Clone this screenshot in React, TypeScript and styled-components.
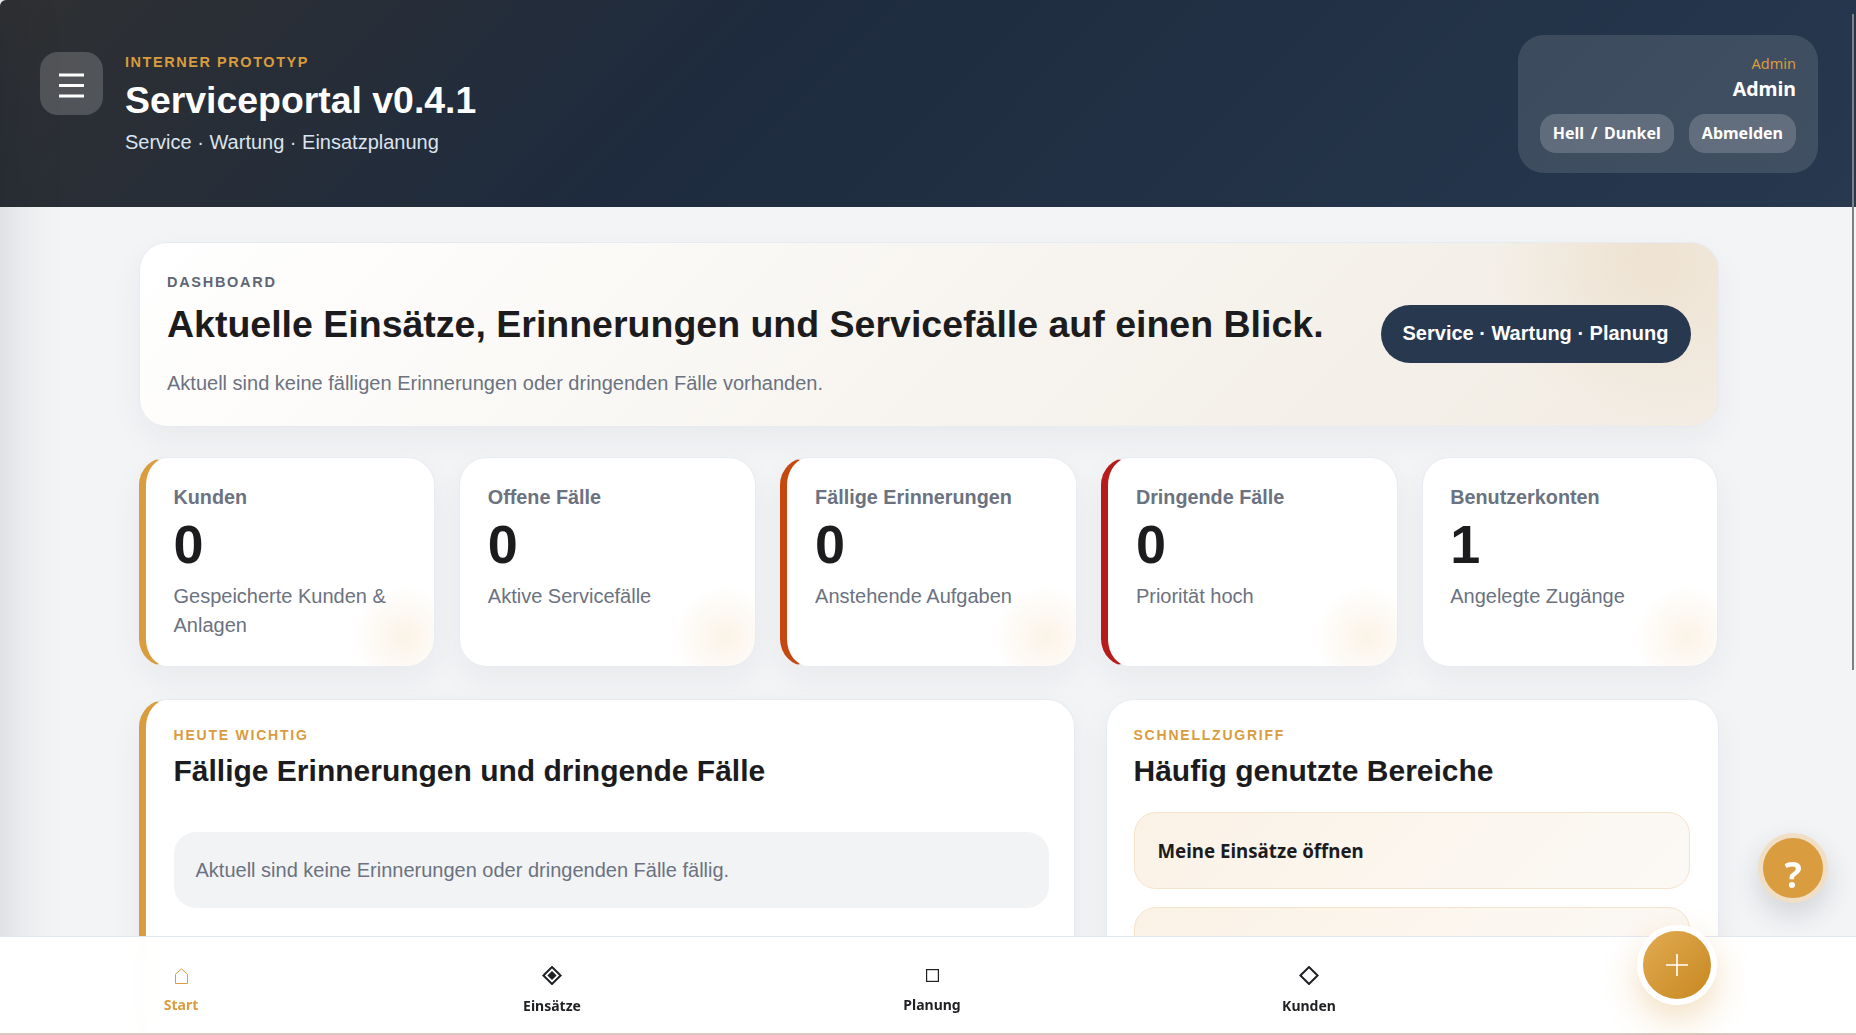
import React from 'react';
import styled, {createGlobalStyle} from 'styled-components';

const GlobalStyle = createGlobalStyle`
  html, body {
    margin: 0;
    height: 100%;
    overflow: hidden;
    background: #f3f4f6;
  }
  * {
    box-sizing: border-box;
  }
  body {
    font-family: "Liberation Sans", Arial, sans-serif;
    color: #1c1c1e;
  }
`;

const BUTTON_FONT = '"Noto Sans", "Open Sans", sans-serif';
const GOLD = '#d99c3e';

const Shell = styled.div`
  display: flex;
  flex-direction: column;
  height: 100vh;
  overflow: hidden;
`;

const Drawer = styled.aside`
  position: fixed;
  top: 0;
  left: -320px;
  width: 320px;
  height: 100%;
  box-shadow: 0 0 60px rgba(15, 23, 42, 0.16);
  z-index: 5;
`;

const Header = styled.header`
  flex: none;
  display: flex;
  align-items: center;
  justify-content: space-between;
  height: 207px;
  padding: 0 38px 0 40px;
  border-top-left-radius: 6px;
  background: linear-gradient(135deg, #2f3032 0%, #1e2b3e 38%, #27384f 100%);
`;

const Brand = styled.div`
  display: flex;
  align-items: flex-start;
  gap: 22px;
`;

const MenuButton = styled.button`
  display: flex;
  align-items: center;
  justify-content: center;
  width: 63px;
  height: 63px;
  padding: 3px 0 0;
  border: 0;
  border-radius: 18px;
  background: rgba(255, 255, 255, 0.18);
`;

const BrandText = styled.div`
  display: flex;
  flex-direction: column;
`;

const Kicker = styled.div`
  font-size: 14.5px;
  line-height: 20px;
  font-weight: 700;
  letter-spacing: 1.55px;
  text-transform: uppercase;
  color: ${GOLD};
`;

const Title = styled.h1`
  margin: 5px 0 0;
  font-size: 37.4px;
  line-height: 46px;
  font-weight: 700;
  color: #fff;
`;

const Subtitle = styled.div`
  margin-top: 6px;
  font-size: 20px;
  line-height: 26px;
  color: #dbe3ee;
`;

const UserCard = styled.div`
  display: flex;
  flex-direction: column;
  align-items: flex-end;
  width: 300px;
  height: 138px;
  padding: 16px 22px 0 0;
  border-radius: 26px;
  background: rgba(255, 255, 255, 0.12);
`;

const UserRole = styled.div`
  font-family: ${BUTTON_FONT};
  font-size: 14.5px;
  line-height: 24px;
  color: ${GOLD};
`;

const UserName = styled.div`
  margin-top: 1px;
  font-family: ${BUTTON_FONT};
  font-size: 19.5px;
  line-height: 26px;
  font-weight: 700;
  color: #fff;
`;

const UserActions = styled.div`
  display: flex;
  gap: 15px;
  margin-top: 12px;
`;

const UserButton = styled.button`
  height: 39px;
  padding: 0 13px;
  border: 0;
  border-radius: 16px;
  font-family: ${BUTTON_FONT};
  font-size: 16px;
  font-weight: 700;
  word-spacing: 2.5px;
  color: #fff;
  background: rgba(255, 255, 255, 0.18);
`;

const Main = styled.main`
  flex: 1;
  min-height: 0;
  overflow: hidden;
  display: flex;
  flex-direction: column;
  padding: 35px 137.5px 0 138.5px;
`;

const Hero = styled.section`
  flex: none;
  display: flex;
  align-items: center;
  justify-content: space-between;
  height: 185px;
  margin-bottom: 30px;
  padding: 0 27px 2px 27.5px;
  border: 1px solid #e6eaf1;
  border-radius: 28px;
  background:
    radial-gradient(circle at 96% 10%, #eee2d1 0, rgba(238, 226, 209, 0) 165px),
    linear-gradient(135deg, #ffffff 0%, #f4f0e9 75%, #f2ece3 100%);
  box-shadow: 0 12px 32px rgba(30, 41, 59, 0.05);
`;

const HeroText = styled.div`
  display: flex;
  flex-direction: column;
`;

const HeroKicker = styled.div`
  font-size: 14.5px;
  line-height: 22px;
  font-weight: 700;
  letter-spacing: 1.7px;
  color: #5f6673;
`;

const HeroTitle = styled.h2`
  margin: 8px 0 0;
  font-size: 37.5px;
  line-height: 46px;
  font-weight: 700;
`;

const HeroNote = styled.p`
  margin: 22px 0 0;
  font-size: 20px;
  line-height: 28px;
  color: #6b7280;
`;

const HeroPill = styled.div`
  flex: none;
  display: flex;
  align-items: center;
  height: 58px;
  padding: 0 22px;
  border-radius: 29px;
  font-size: 20px;
  font-weight: 700;
  color: #fff;
  background: #27384f;
`;

const StatGrid = styled.div`
  flex: none;
  display: grid;
  grid-template-columns: repeat(5, 1fr);
  gap: 24px;
  margin-bottom: 32px;
`;

const StatCard = styled.article<{$accent?: string}>`
  height: 210px;
  padding: 26px 26px 0 ${(props) => (props.$accent ? 28 : 27.5)}px;
  border: 1px solid #e8ebf1;
  border-left: ${(props) => (props.$accent ? `7px solid ${props.$accent}` : '1px solid #e8ebf1')};
  border-radius: 28px;
  background:
    radial-gradient(circle at calc(100% - 30px) calc(100% - 29px), #fbf3e7 0, rgba(251, 243, 231, 0) 52px),
    #fff;
  box-shadow: 0 12px 32px rgba(30, 41, 59, 0.05);
`;

const StatLabel = styled.div`
  font-size: 19.8px;
  line-height: 26px;
  font-weight: 700;
  color: #6b7280;
`;

const StatValue = styled.div`
  margin-top: 5px;
  font-size: 54px;
  line-height: 58px;
  font-weight: 700;
`;

const StatNote = styled.div`
  margin-top: 9px;
  font-size: 20px;
  line-height: 29px;
  color: #6b7280;
`;

const PanelGrid = styled.div`
  flex: none;
  display: grid;
  grid-template-columns: 936px 613px;
  gap: 31px;
`;

const Panel = styled.section<{$accent?: string}>`
  height: 420px;
  padding: 25px ${(props) => (props.$accent ? 25 : 28)}px 0 ${(props) => (props.$accent ? 28 : 27)}px;
  border: 1px solid #e6eaf1;
  border-left: ${(props) => (props.$accent ? `7px solid ${props.$accent}` : '1px solid #e6eaf1')};
  border-radius: 28px;
  background: #fff;
  box-shadow: 0 12px 32px rgba(30, 41, 59, 0.05);
`;

const PanelKicker = styled.div`
  font-size: 14px;
  line-height: 20px;
  font-weight: 700;
  letter-spacing: 1.78px;
  color: ${GOLD};
`;

const PanelTitle = styled.h3`
  margin: 7px 0 0;
  font-size: 30px;
  line-height: 38px;
  font-weight: 700;
`;

const EmptyBox = styled.div`
  display: flex;
  align-items: center;
  height: 76px;
  margin-top: 42px;
  padding: 0 22px;
  border-radius: 22px;
  font-size: 20px;
  color: #6b7280;
  background: #f2f3f5;
`;

const QuickLinks = styled.div`
  display: flex;
  flex-direction: column;
  gap: 18px;
  margin-top: 22px;
`;

const QuickLink = styled.a`
  display: flex;
  align-items: center;
  height: 77px;
  padding: 0 23px;
  border: 1px solid #f5e3cc;
  border-radius: 22px;
  font-family: ${BUTTON_FONT};
  font-size: 18.7px;
  font-weight: 700;
  color: #1c1c1e;
  background: linear-gradient(135deg, #fbf2e6 0%, #fbf9f5 100%);
`;

const BottomNav = styled.nav`
  position: fixed;
  left: 0;
  right: 0;
  bottom: 0;
  z-index: 10;
  display: grid;
  grid-template-columns: 362px 380px 380px 374px 360px;
  align-items: center;
  height: 99px;
  padding-top: 8px;
  border-top: 1px solid #e2e8f0;
  border-bottom: 2px solid #dcc8c0;
  background: rgba(255, 255, 255, 0.97);
  backdrop-filter: blur(12px);
`;

const NavItem = styled.a<{$active?: boolean}>`
  display: flex;
  flex-direction: column;
  align-items: center;
  gap: 9px;
  font-family: ${BUTTON_FONT};
  font-size: 14px;
  line-height: 18px;
  font-weight: 700;
  color: ${(props) => (props.$active ? GOLD : '#1f2024')};
`;

const NavIcon = styled.span<{$height: number}>`
  display: flex;
  align-items: center;
  justify-content: center;
  height: ${(props) => props.$height}px;
`;

const FabSlot = styled.div`
  display: flex;
  justify-content: center;
  padding-left: 2px;
`;

const Fab = styled.button`
  display: flex;
  align-items: center;
  justify-content: center;
  width: 80px;
  height: 80px;
  margin-top: -49px;
  padding: 0;
  border: 6px solid #fff;
  border-radius: 50%;
  background: linear-gradient(135deg, #e2aa52 0%, #c68820 100%);
  box-shadow: 0 14px 34px rgba(217, 156, 62, 0.32);
`;

const HelpButton = styled.button`
  position: fixed;
  top: 833px;
  right: 28px;
  z-index: 9;
  width: 70px;
  height: 70px;
  padding: 14px 0 0;
  border: 5px solid #f0dfc5;
  border-radius: 50%;
  font-family: ${BUTTON_FONT};
  font-size: 36px;
  line-height: 1;
  font-weight: 700;
  color: #fff;
  background: ${GOLD};
  box-shadow: 0 12px 28px rgba(30, 41, 59, 0.16);
`;

const ScrollThumb = styled.div`
  position: fixed;
  top: 14px;
  right: 2px;
  z-index: 20;
  width: 2px;
  height: 656px;
  background: #808080;
`;

const stats = [
  {label: 'Kunden', value: 0, note: 'Gespeicherte Kunden & Anlagen', accent: GOLD},
  {label: 'Offene Fälle', value: 0, note: 'Aktive Servicefälle'},
  {label: 'Fällige Erinnerungen', value: 0, note: 'Anstehende Aufgaben', accent: '#c5490f'},
  {label: 'Dringende Fälle', value: 0, note: 'Priorität hoch', accent: '#b71c1c'},
  {label: 'Benutzerkonten', value: 1, note: 'Angelegte Zugänge'}
];

function HomeGlyph() {
  return (
    <svg width="13" height="16" viewBox="0 0 13 16" fill="none" stroke={GOLD} strokeWidth="1">
      <path d="M.5 15.5V6.2L6.5.8l6 5.4v9.3z" />
    </svg>
  );
}

function DiamondDotGlyph() {
  return (
    <svg width="20" height="19" viewBox="0 0 20 19" fill="#1f2024">
      <path d="M10 1 18.6 9.5 10 18 1.4 9.5z" fill="none" stroke="#1f2024" strokeWidth="2" />
      <path d="M10 5 14.6 9.5 10 14 5.4 9.5z" />
    </svg>
  );
}

function SquareGlyph() {
  return (
    <svg width="13" height="13" viewBox="0 0 13 13" fill="none" stroke="#1f2024" strokeWidth="1.2">
      <rect x=".6" y=".6" width="11.8" height="11.8" />
    </svg>
  );
}

function DiamondGlyph() {
  return (
    <svg width="20" height="19" viewBox="0 0 20 19" fill="none" stroke="#1f2024" strokeWidth="2">
      <path d="M10 1 18.6 9.5 10 18 1.4 9.5z" />
    </svg>
  );
}

export default function App() {
  return (
    <Shell>
      <GlobalStyle />
      <Drawer />
      <Header>
        <Brand>
          <MenuButton aria-label="Menü">
            <svg width="25" height="25" viewBox="0 0 25 25" stroke="#fff" strokeWidth="3">
              <path d="M0 2h25M0 12.5h25M0 23h25" />
            </svg>
          </MenuButton>
          <BrandText>
            <Kicker>Interner Prototyp</Kicker>
            <Title>Serviceportal v0.4.1</Title>
            <Subtitle>Service · Wartung · Einsatzplanung</Subtitle>
          </BrandText>
        </Brand>
        <UserCard>
          <UserRole>Admin</UserRole>
          <UserName>Admin</UserName>
          <UserActions>
            <UserButton>Hell / Dunkel</UserButton>
            <UserButton>Abmelden</UserButton>
          </UserActions>
        </UserCard>
      </Header>

      <Main>
        <Hero>
          <HeroText>
            <HeroKicker>DASHBOARD</HeroKicker>
            <HeroTitle>Aktuelle Einsätze, Erinnerungen und Servicefälle auf einen Blick.</HeroTitle>
            <HeroNote>Aktuell sind keine fälligen Erinnerungen oder dringenden Fälle vorhanden.</HeroNote>
          </HeroText>
          <HeroPill>Service · Wartung · Planung</HeroPill>
        </Hero>

        <StatGrid>
          {stats.map((stat) => (
            <StatCard key={stat.label} $accent={stat.accent}>
              <StatLabel>{stat.label}</StatLabel>
              <StatValue>{stat.value}</StatValue>
              <StatNote>{stat.note}</StatNote>
            </StatCard>
          ))}
        </StatGrid>

        <PanelGrid>
          <Panel $accent={GOLD}>
            <PanelKicker>HEUTE WICHTIG</PanelKicker>
            <PanelTitle>Fällige Erinnerungen und dringende Fälle</PanelTitle>
            <EmptyBox>Aktuell sind keine Erinnerungen oder dringenden Fälle fällig.</EmptyBox>
          </Panel>
          <Panel>
            <PanelKicker>SCHNELLZUGRIFF</PanelKicker>
            <PanelTitle>Häufig genutzte Bereiche</PanelTitle>
            <QuickLinks>
              <QuickLink>Meine Einsätze öffnen</QuickLink>
              <QuickLink />
            </QuickLinks>
          </Panel>
        </PanelGrid>
      </Main>

      <BottomNav>
        <NavItem $active>
          <NavIcon $height={22}>
            <HomeGlyph />
          </NavIcon>
          Start
        </NavItem>
        <NavItem>
          <NavIcon $height={25}>
            <DiamondDotGlyph />
          </NavIcon>
          Einsätze
        </NavItem>
        <NavItem>
          <NavIcon $height={22}>
            <SquareGlyph />
          </NavIcon>
          Planung
        </NavItem>
        <NavItem>
          <NavIcon $height={25}>
            <DiamondGlyph />
          </NavIcon>
          Kunden
        </NavItem>
        <FabSlot>
          <Fab aria-label="Neu">
            <svg width="24" height="24" viewBox="0 0 24 24" stroke="#fff" strokeWidth="1.6">
              <path d="M12 1v22M1 12h22" />
            </svg>
          </Fab>
        </FabSlot>
      </BottomNav>

      <HelpButton>?</HelpButton>
      <ScrollThumb />
    </Shell>
  );
}
